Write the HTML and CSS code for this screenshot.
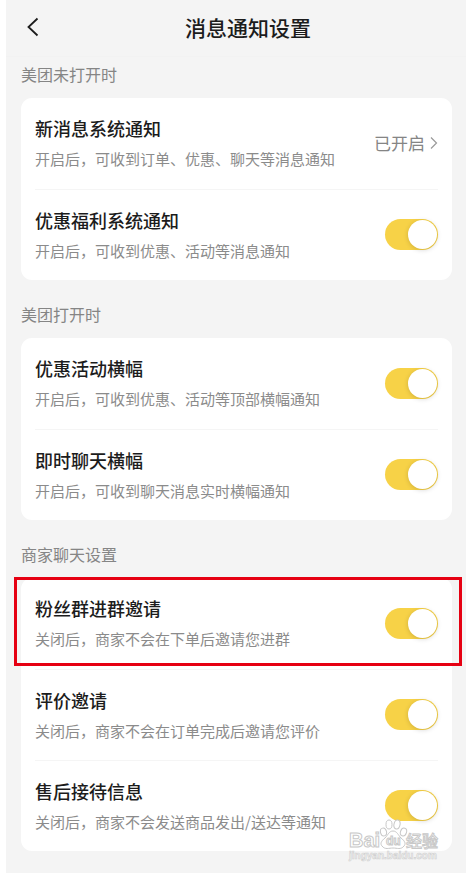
FILE: index.html
```html
<!DOCTYPE html>
<html lang="zh-CN">
<head>
<meta charset="utf-8">
<meta name="viewport" content="width=device-width, initial-scale=1">
<title>消息通知设置</title>
<link rel="stylesheet" href="styles.css">
</head>
<body>
<div class="page">
  <header class="header">
    <button class="back" type="button" aria-label="返回">
      <svg width="24" height="24" viewBox="0 0 24 24"><path d="M13.5 3.5 4.5 12l9 8.5"/></svg>
    </button>
    <h1 class="title">消息通知设置</h1>
  </header>
  <main class="sections">
    <section>
      <h2 class="label">美团未打开时</h2>
      <div class="card">
        <a class="row" href="#system">
          <span class="text"><span class="name">新消息系统通知</span><span class="desc">开启后，可收到订单、优惠、聊天等消息通知</span></span>
          <span class="status">已开启<svg width="8" height="14" viewBox="0 0 8 14"><path d="M1 1.5 6.5 7 1 12.5"/></svg></span>
        </a>
        <label class="row">
          <span class="text"><span class="name">优惠福利系统通知</span><span class="desc">开启后，可收到优惠、活动等消息通知</span></span>
          <input class="switch" type="checkbox" role="switch" checked>
        </label>
      </div>
    </section>
    <section>
      <h2 class="label">美团打开时</h2>
      <div class="card">
        <label class="row">
          <span class="text"><span class="name">优惠活动横幅</span><span class="desc">开启后，可收到优惠、活动等顶部横幅通知</span></span>
          <input class="switch" type="checkbox" role="switch" checked>
        </label>
        <label class="row">
          <span class="text"><span class="name">即时聊天横幅</span><span class="desc">开启后，可收到聊天消息实时横幅通知</span></span>
          <input class="switch" type="checkbox" role="switch" checked>
        </label>
      </div>
    </section>
    <section>
      <h2 class="label">商家聊天设置</h2>
      <div class="card">
        <label class="row highlighted">
          <span class="text"><span class="name">粉丝群进群邀请</span><span class="desc">关闭后，商家不会在下单后邀请您进群</span></span>
          <input class="switch" type="checkbox" role="switch" checked>
        </label>
        <label class="row">
          <span class="text"><span class="name">评价邀请</span><span class="desc">关闭后，商家不会在订单完成后邀请您评价</span></span>
          <input class="switch" type="checkbox" role="switch" checked>
        </label>
        <label class="row">
          <span class="text"><span class="name">售后接待信息</span><span class="desc">关闭后，商家不会发送商品发出/送达等通知</span></span>
          <input class="switch" type="checkbox" role="switch" checked>
        </label>
      </div>
    </section>
  </main>
  <svg class="watermark" width="94" height="46" viewBox="0 0 94 46" aria-hidden="true">
    <g class="mark">
      <text class="brand" x="2" y="28">Bai</text>
      <ellipse cx="36.5" cy="13" rx="3" ry="4" transform="rotate(-15 36.5 13)"/>
      <ellipse cx="42" cy="5.5" rx="3" ry="4.5"/>
      <ellipse cx="50" cy="5.5" rx="3" ry="4.5" transform="rotate(12 50 5.5)"/>
      <ellipse cx="56.5" cy="13" rx="3" ry="4" transform="rotate(20 56.5 13)"/>
      <path d="M46 12c-4 0-5 4-8 7-4 3-5 6-3 8 3 4 7 2 11 2s8 2 11-2c2-2 1-5-3-8-3-3-4-7-8-7Z"/>
      <text class="du" x="39" y="26">du</text>
      <text class="cjk" x="59" y="28">经验</text>
    </g>
    <text class="site" x="2" y="40">jingyan.baidu.com</text>
  </svg>
</div>
</body>
</html>
```
FILE: styles.css
```css
* {
  box-sizing: border-box;
}

body {
  margin: 0;
  background: #fff;
  color: #1c1c1c;
  font-family: "Noto Sans CJK SC", sans-serif;
}

.page {
  position: relative;
  min-height: 100vh;
  margin-left: 6px;
  padding-bottom: 22px;
  background: #f4f4f4;
}

.header {
  display: flex;
  align-items: center;
  height: 57px;
  padding: 0 18px 3px;
  border-bottom: 1px solid #f2f2f2;
}

.back {
  display: flex;
  padding: 0;
  border: 0;
  background: none;
}

.back svg {
  fill: none;
  stroke: #1c1c1c;
  stroke-width: 1.8;
}

.title {
  flex: 1;
  margin: 0;
  font-size: 21px;
  font-weight: 500;
  line-height: 30px;
  text-align: center;
}

.sections {
  display: flex;
  flex-direction: column;
  gap: 22px;
  padding: 5px 14px 0 15px;
}

.label {
  margin: 0 0 12px;
  color: #858585;
  font-size: 16px;
  font-weight: 400;
  line-height: 24px;
}

.card {
  border-radius: 11px;
  background: #fff;
}

.row {
  position: relative;
  display: flex;
  align-items: center;
  justify-content: space-between;
  min-height: 91px;
  margin: 0 14px;
  padding-bottom: 1px;
  color: inherit;
  text-decoration: none;
}

.row + .row {
  border-top: 1px solid #f5f5f5;
}

.highlighted::after {
  content: "";
  position: absolute;
  inset: -1px -24px 3px -21px;
  border: 3px solid #e60012;
}

.text {
  display: flex;
  flex-direction: column;
  gap: 8px;
  padding-bottom: 2px;
}

.name {
  font-size: 18px;
  font-weight: 500;
  line-height: 26px;
}

.desc {
  color: #8b8b8b;
  font-size: 15px;
  line-height: 20px;
}

.status {
  display: flex;
  align-items: center;
  gap: 5px;
  color: #858585;
  font-size: 17px;
  line-height: 24px;
}

.status svg {
  fill: none;
  stroke: #9a9a9a;
  stroke-width: 1.2;
}

.switch {
  appearance: none;
  flex: none;
  display: flex;
  justify-content: flex-end;
  width: 53px;
  height: 31px;
  margin: 0;
  padding: 1px;
  border-radius: 16px;
  background: #f7d247;
}

.switch::before {
  content: "";
  width: 29px;
  height: 29px;
  border-radius: 50%;
  background: #fff;
  box-shadow: 0 1px 5px rgba(0, 0, 0, 0.16);
}

.switch:not(:checked) {
  justify-content: flex-start;
  background: #ddd;
}

.watermark {
  position: absolute;
  right: 25px;
  bottom: 8px;
  pointer-events: none;
}

.mark {
  fill: #fff;
  stroke: #c8c8c8;
  stroke-width: 1;
}

.brand,
.du,
.site {
  font-family: "Liberation Sans", sans-serif;
  font-weight: 700;
}

.brand {
  font-size: 20px;
}

.du {
  font-size: 12px;
}

.cjk {
  font-size: 16px;
  font-weight: 500;
}

.site {
  fill: #f4f4f4;
  stroke: #d0d0d0;
  stroke-width: 0.6;
  font-size: 10px;
}
```
